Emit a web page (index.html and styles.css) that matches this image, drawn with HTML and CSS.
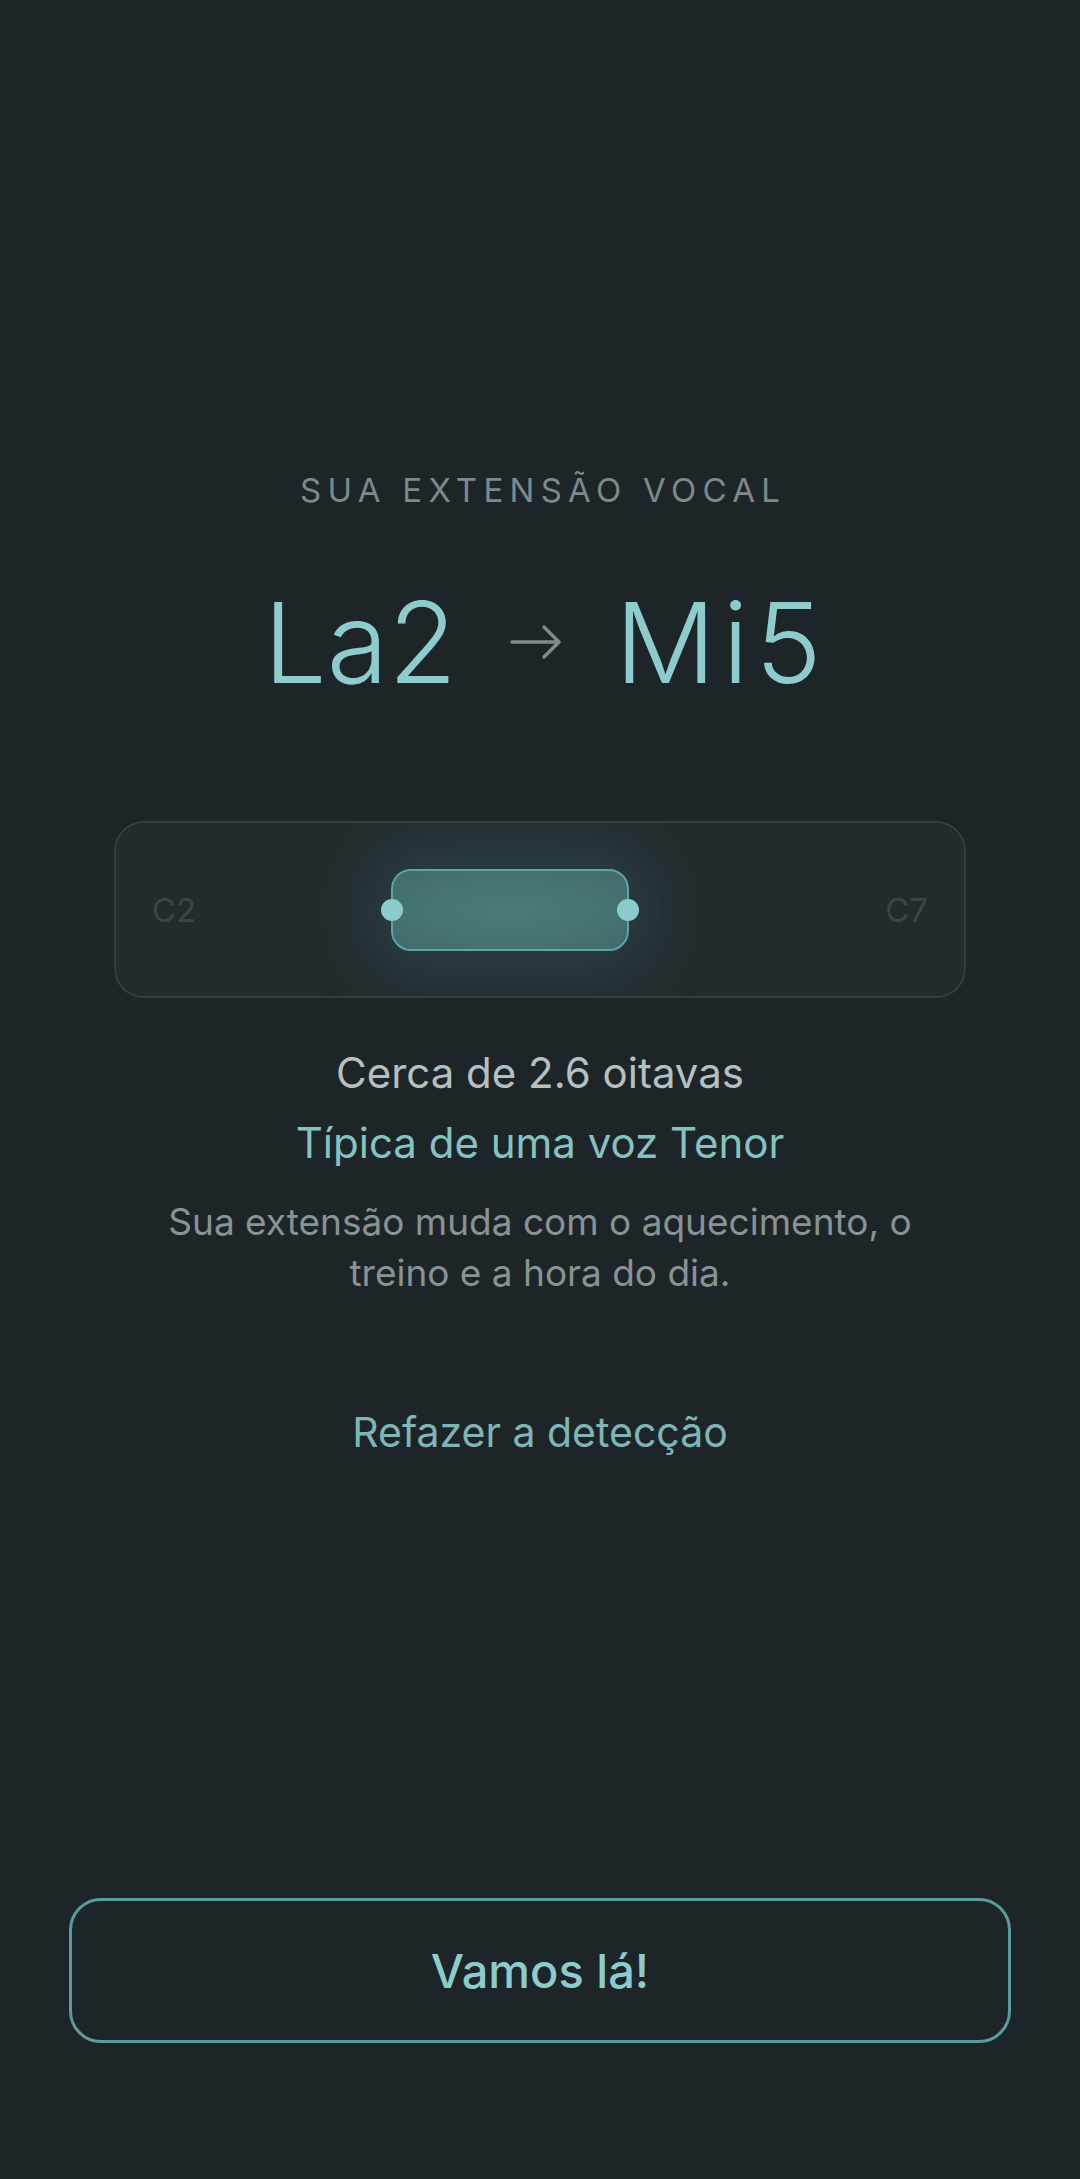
FILE: index.html
```html
<!DOCTYPE html>
<html lang="pt-BR">
<head>
    <meta charset="UTF-8">
    <meta name="viewport" content="width=device-width, initial-scale=1.0">
    <title>Extensão vocal</title>
    <link rel="stylesheet" href="styles.css">
</head>
<body>
    <main class="screen">
        <section class="result">
            <p class="eyebrow">SUA EXTENSÃO VOCAL</p>

            <div class="range-notes">
                <span class="note-name">La2</span>
                <svg class="arrow" width="54" height="40" viewBox="0 0 54 40" aria-hidden="true">
                    <path d="M3 20 H50 M35 5 L50 20 L35 35" />
                </svg>
                <span class="note-name wide">Mi5</span>
            </div>

            <!-- range bar: C2 .. C7 -->
            <div class="range-card">
                <span class="edge-label">C2</span>
                <div class="track">
                    <div class="band" style="left: 28.3%; width: 34.5%;">
                        <span class="handle handle-left"></span>
                        <span class="handle handle-right"></span>
                    </div>
                </div>
                <span class="edge-label">C7</span>
            </div>

            <p class="octaves">Cerca de 2.6 oitavas</p>
            <p class="voice-type">Típica de uma voz Tenor</p>
            <p class="hint">Sua extensão muda com o aquecimento, o treino e a hora do dia.</p>

            <button class="retry" type="button">Refazer a detecção</button>
        </section>

        <footer class="actions">
            <button class="cta" type="button">Vamos lá!</button>
        </footer>
    </main>
</body>
</html>
```

FILE: styles.css
```css
html, body {
    margin: 0;
    padding: 0;
}

body {
    background: #1e2528;
    font-family: Inter, "Noto Sans", sans-serif;
    color: #b5c0c0;
}

.screen {
    min-height: 2179px;
    display: flex;
    flex-direction: column;
}

.result {
    display: flex;
    flex-direction: column;
    align-items: center;
    padding-top: 470px;
    text-align: center;
}

.result p {
    margin: 0;
}

.eyebrow {
    font-size: 33px;
    line-height: 40px;
    letter-spacing: 0.19em;
    color: #7d898b;
    padding-left: 0.19em;
}

.range-notes {
    margin-top: 76px;
    display: flex;
    align-items: center;
    gap: 52px;
    height: 112px;
    padding-left: 12px;
}

.note-name {
    font-size: 112px;
    line-height: 1;
    font-weight: 300;
    color: #8ecbcc;
}

.note-name.wide {
    letter-spacing: 0.06em;
}

.arrow path {
    fill: none;
    stroke: #7f8a8c;
    stroke-width: 3.5;
    stroke-linecap: round;
    stroke-linejoin: round;
}

.range-card {
    margin-top: 123px;
    align-self: stretch;
    margin-left: 114px;
    margin-right: 114px;
    height: 177px;
    box-sizing: border-box;
    display: flex;
    align-items: center;
    padding: 0 36px;
    background: #232b2e;
    border: 2px solid #343d40;
    border-radius: 30px;
    overflow: hidden;
}

.edge-label {
    font-size: 33px;
    color: #3b4548;
}

.track {
    flex: 1;
    position: relative;
    height: 82px;
}

.band {
    position: absolute;
    top: 0;
    bottom: 0;
    box-sizing: border-box;
    border: 2px solid #5fa4a5;
    border-radius: 20px;
    background: radial-gradient(ellipse at center, #4b7b7b 0%, #426c6c 100%);
    box-shadow: 0 0 70px 18px rgba(70, 140, 150, 0.25);
}

.handle {
    position: absolute;
    top: 50%;
    width: 22px;
    height: 22px;
    margin-top: -11px;
    border-radius: 50%;
    background: #8ccbcb;
}

.handle-left { left: -12px; }
.handle-right { right: -12px; }

.octaves {
    margin-top: 51px !important;
    font-size: 42px;
    line-height: 48px;
    color: #b5c0c0;
}

.voice-type {
    margin-top: 22px !important;
    font-size: 42px;
    line-height: 48px;
    color: #86c2c2;
}

.hint {
    margin-top: 29px !important;
    max-width: 800px;
    font-size: 37px;
    line-height: 51px;
    color: #879394;
}

.retry {
    margin-top: 110px;
    padding: 0;
    background: none;
    border: none;
    font-family: inherit;
    font-size: 41px;
    line-height: 48px;
    color: #7fb5b5;
    cursor: pointer;
}

.actions {
    margin-top: auto;
    padding: 0 69px 136px;
}

.cta {
    display: block;
    width: 100%;
    height: 145px;
    background: transparent;
    border: 3px solid #5a9c9e;
    border-radius: 32px;
    font-family: inherit;
    font-size: 47px;
    font-weight: 500;
    color: #8dcccc;
    cursor: pointer;
}
```
